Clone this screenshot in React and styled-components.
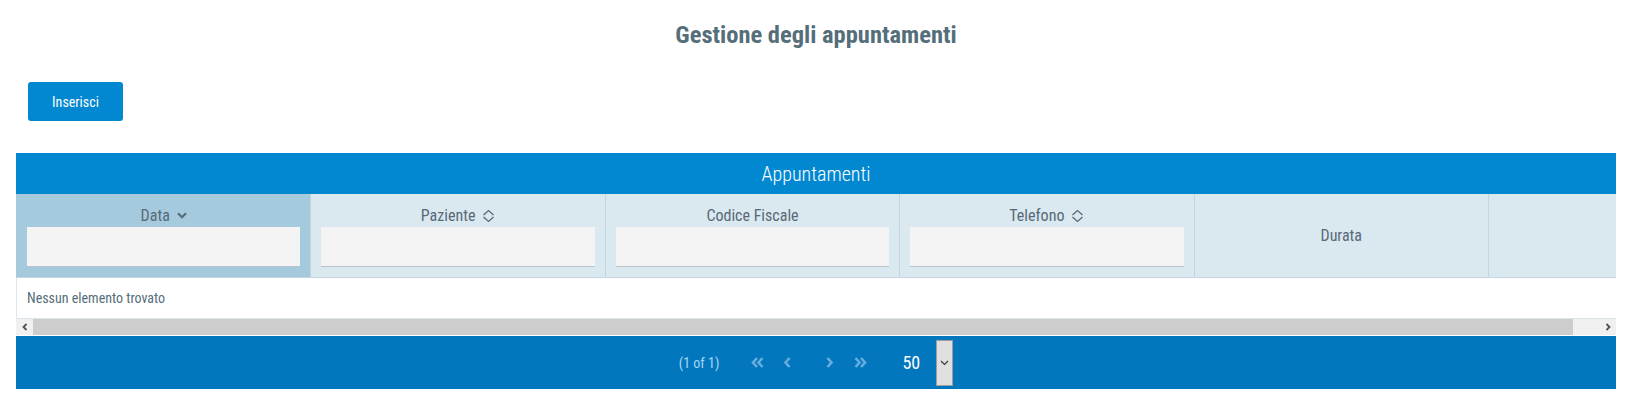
import React from "react";
import styled, { createGlobalStyle } from "styled-components";

const FONT = `"Roboto Condensed", "Liberation Sans Narrow", "Roboto", sans-serif`;

const GlobalStyle = createGlobalStyle`
  html, body { margin: 0; padding: 0; background: #ffffff; }
  body { font-family: ${FONT}; font-stretch: condensed; }
  * { box-sizing: border-box; }
`;

const Page = styled.div`
  width: 1636px;
  padding: 0 20px 0 16px;
`;

const Title = styled.h1`
  margin: 21px 0 0;
  text-align: center;
  font-size: 24.5px;
  line-height: 28px;
  font-weight: 700;
  color: #546e7a;
`;

const Toolbar = styled.div`
  display: flex;
  padding: 33px 0 32px 12px;
`;

const PrimaryButton = styled.button`
  width: 95px;
  height: 39px;
  border: none;
  border-radius: 3px;
  background: #0288d1;
  color: #ffffff;
  font-family: ${FONT};
  font-stretch: condensed;
  font-size: 14px;
  cursor: pointer;
`;

const Table = styled.section`
  width: 1600px;
`;

const Caption = styled.div`
  height: 41px;
  background: #0288d1;
  color: #ffffff;
  font-size: 20px;
  font-weight: 300;
  display: flex;
  align-items: center;
  justify-content: center;
`;

const ScrollArea = styled.div`
  overflow: hidden;
`;

const ScrollContent = styled.div`
  width: 1627px;
`;

const HeaderRow = styled.div`
  display: grid;
  grid-template-columns: repeat(5, 294.4px) 1fr;
  height: 84px;
  background: #dae8f0;
  border-bottom: 1px solid #c6d6e0;
`;

const HeaderCell = styled.div`
  display: flex;
  flex-direction: column;
  justify-content: ${(p) => (p.$filter ? "flex-start" : "center")};
  padding: ${(p) => (p.$filter ? "12px 10px 0" : "0 10px")};
  background: ${(p) => (p.$sorted ? "#a6cadd" : "#dae8f0")};
  border-left: 1px solid ${(p) => (p.$first ? "transparent" : "#c4d5df")};
`;

const HeaderLabel = styled.div`
  display: flex;
  align-items: center;
  justify-content: center;
  gap: 7px;
  height: 19px;
  font-size: 16px;
  line-height: 19px;
  color: #586a77;
`;

const FilterInput = styled.input`
  display: block;
  width: 100%;
  height: 40px;
  margin-top: 2px;
  background: #f4f4f4;
  border: none;
  border-bottom: 1px solid #b5c3cb;
  outline: none;
  font-family: ${FONT};
  font-size: 14px;
  padding: 0 8px;
`;

const EmptyRow = styled.div`
  height: 41px;
  display: flex;
  align-items: center;
  padding: 0 10px;
  border-left: 1px solid #dde6eb;
  border-bottom: 1px solid #dde6eb;
  font-size: 14px;
  color: #546e7a;
`;

const ScrollBar = styled.div`
  display: flex;
  height: 16px;
  margin-bottom: 1px;
  background: #f0f0f0;
`;

const ScrollButton = styled.div`
  width: 17px;
  display: flex;
  align-items: center;
  justify-content: center;
  background: #f0f0f0;
`;

const ScrollThumb = styled.div`
  width: 1540px;
  background: #cdcdcd;
`;

const ScrollTrack = styled.div`
  flex: 1;
`;

const Paginator = styled.div`
  height: 53px;
  background: #0277bd;
  display: flex;
  align-items: center;
  justify-content: center;
`;

const PageInfo = styled.span`
  font-size: 14px;
  color: #a4d8f6;
  margin-right: 23px;
`;

const NavButton = styled.span`
  width: 30px;
  height: 30px;
  display: flex;
  align-items: center;
  justify-content: center;
  color: #67ade0;
`;

const PageLinks = styled.span`
  width: 13px;
`;

const RowsDropdown = styled.div`
  display: flex;
  align-items: center;
  margin-left: 27px;
`;

const RowsLabel = styled.span`
  font-size: 18px;
  color: #ffffff;
  margin-right: 16px;
`;

const RowsTrigger = styled.span`
  width: 17px;
  height: 46px;
  display: flex;
  align-items: center;
  justify-content: center;
  background: #e0e0e0;
  border: 1px solid #9e9e9e;
`;

const SortDown = () => (
  <svg width="10" height="7" viewBox="0 0 10 7" fill="none">
    <path d="M1 1.2 L5 5.2 L9 1.2" stroke="#586a77" strokeWidth="2.2" />
  </svg>
);

const SortBoth = () => (
  <svg width="13" height="14" viewBox="0 0 13 14" fill="none">
    <path d="M1.5 6 L6.5 1.5 L11.5 6" stroke="#586a77" strokeWidth="1.3" />
    <path d="M1.5 8 L6.5 12.5 L11.5 8" stroke="#586a77" strokeWidth="1.3" />
  </svg>
);

const Chevron = ({ dir = "left", double = false }) => {
  const single = dir === "left" ? "M6.5 1 L2.5 5.5 L6.5 10" : "M1.5 1 L5.5 5.5 L1.5 10";
  if (!double) {
    return (
      <svg width="8" height="11" viewBox="0 0 8 11" fill="none">
        <path d={single} stroke="currentColor" strokeWidth="2.6" />
      </svg>
    );
  }
  const paths =
    dir === "left"
      ? ["M6 1 L2 5.5 L6 10", "M11.5 1 L7.5 5.5 L11.5 10"]
      : ["M1.5 1 L5.5 5.5 L1.5 10", "M7 1 L11 5.5 L7 10"];
  return (
    <svg width="13" height="11" viewBox="0 0 13 11" fill="none">
      {paths.map((d) => (
        <path key={d} d={d} stroke="currentColor" strokeWidth="2.6" />
      ))}
    </svg>
  );
};

const ScrollArrow = ({ dir }) => (
  <svg width="6" height="8" viewBox="0 0 6 8" fill="none">
    <path
      d={dir === "left" ? "M4.5 1 L1.5 4 L4.5 7" : "M1.5 1 L4.5 4 L1.5 7"}
      stroke="#505050"
      strokeWidth="1.8"
    />
  </svg>
);

const DropChevron = () => (
  <svg width="9" height="6" viewBox="0 0 9 6" fill="none">
    <path d="M1 1 L4.5 4.5 L8 1" stroke="#333333" strokeWidth="1.1" />
  </svg>
);

const columns = [
  { label: "Data", sort: "down", filter: true, sorted: true },
  { label: "Paziente", sort: "both", filter: true },
  { label: "Codice Fiscale", filter: true },
  { label: "Telefono", sort: "both", filter: true },
  { label: "Durata" },
  { label: "" },
];

export default function App() {
  return (
    <>
      <GlobalStyle />
      <Page>
        <Title>Gestione degli appuntamenti</Title>
        <Toolbar>
          <PrimaryButton>Inserisci</PrimaryButton>
        </Toolbar>
        <Table>
          <Caption>Appuntamenti</Caption>
          <ScrollArea>
            <ScrollContent>
              <HeaderRow>
                {columns.map((c, i) => (
                  <HeaderCell
                    key={i}
                    $first={i === 0}
                    $sorted={c.sorted}
                    $filter={c.filter}
                  >
                    {c.label && (
                      <HeaderLabel>
                        {c.label}
                        {c.sort === "down" && <SortDown />}
                        {c.sort === "both" && <SortBoth />}
                      </HeaderLabel>
                    )}
                    {c.filter && <FilterInput type="text" />}
                  </HeaderCell>
                ))}
              </HeaderRow>
              <EmptyRow>Nessun elemento trovato</EmptyRow>
            </ScrollContent>
          </ScrollArea>
          <ScrollBar>
            <ScrollButton>
              <ScrollArrow dir="left" />
            </ScrollButton>
            <ScrollThumb />
            <ScrollTrack />
            <ScrollButton>
              <ScrollArrow dir="right" />
            </ScrollButton>
          </ScrollBar>
          <Paginator>
            <PageInfo>(1 of 1)</PageInfo>
            <NavButton>
              <Chevron dir="left" double />
            </NavButton>
            <NavButton>
              <Chevron dir="left" />
            </NavButton>
            <PageLinks />
            <NavButton>
              <Chevron dir="right" />
            </NavButton>
            <NavButton>
              <Chevron dir="right" double />
            </NavButton>
            <RowsDropdown>
              <RowsLabel>50</RowsLabel>
              <RowsTrigger>
                <DropChevron />
              </RowsTrigger>
            </RowsDropdown>
          </Paginator>
        </Table>
      </Page>
    </>
  );
}
